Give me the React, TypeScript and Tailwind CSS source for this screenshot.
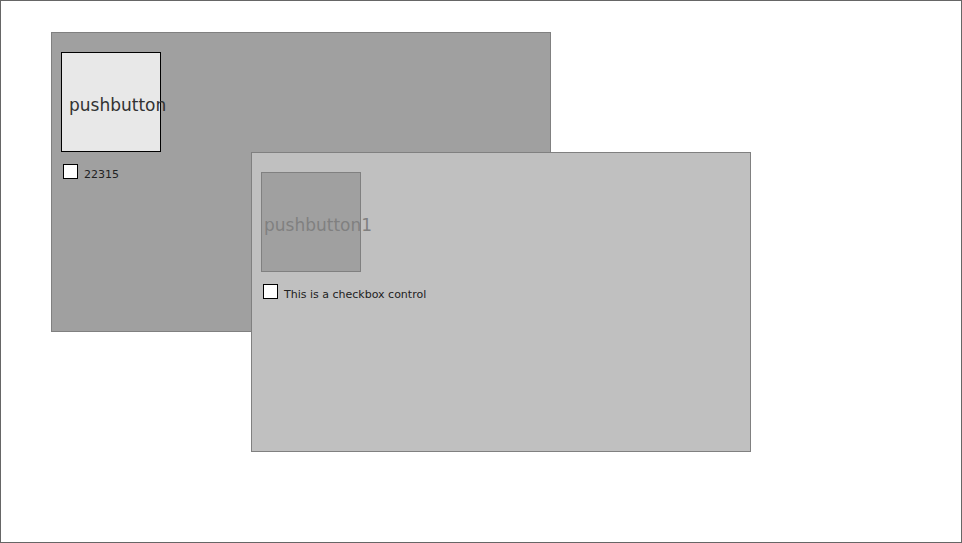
import React from "react";

type WinProps = {
  pos: string;
  bg: string;
  btnClass: string;
  textClass: string;
  btnText: string;
  label: string;
};

const Win = ({ pos, bg, btnClass, textClass, btnText, label }: WinProps) => {
  return (
    <div className={`absolute ${pos} w-[500px] h-[300px] border border-[#808080] ${bg} pl-[9px] pt-[19px]`}>
      <div className={`w-[100px] h-[100px] border flex items-center ${btnClass}`}>
        <span className={`pt-[6px] text-[17px] leading-none whitespace-nowrap ${textClass}`}>{btnText}</span>
      </div>
      <div className="flex items-start mt-[12px] ml-[2px] gap-[6px]">
        <div className="w-[15px] h-[15px] bg-white border border-black" />
        <span className="text-[11px] leading-none text-[#222] mt-[5px]">{label}</span>
      </div>
    </div>
  );
}

export default function App() {
  return (
    <div
      className="relative w-[962px] h-[543px] bg-white border border-[#666] overflow-hidden"
      style={{ fontFamily: '"DejaVu Sans", sans-serif' }}
    >
      <Win
        pos="left-[50px] top-[31px]"
        bg="bg-[#a0a0a0]"
        btnClass="bg-[#e8e8e8] border-black text-[#333]"
        textClass="pl-[7px]"
        btnText="pushbutton"
        label="22315"
      />
      <Win
        pos="left-[250px] top-[151px]"
        bg="bg-[#c0c0c0]"
        btnClass="bg-[#a0a0a0] border-[#808080] text-[#808080]"
        textClass="pl-[2px]"
        btnText="pushbutton1"
        label="This is a checkbox control"
      />
    </div>
  );
}
